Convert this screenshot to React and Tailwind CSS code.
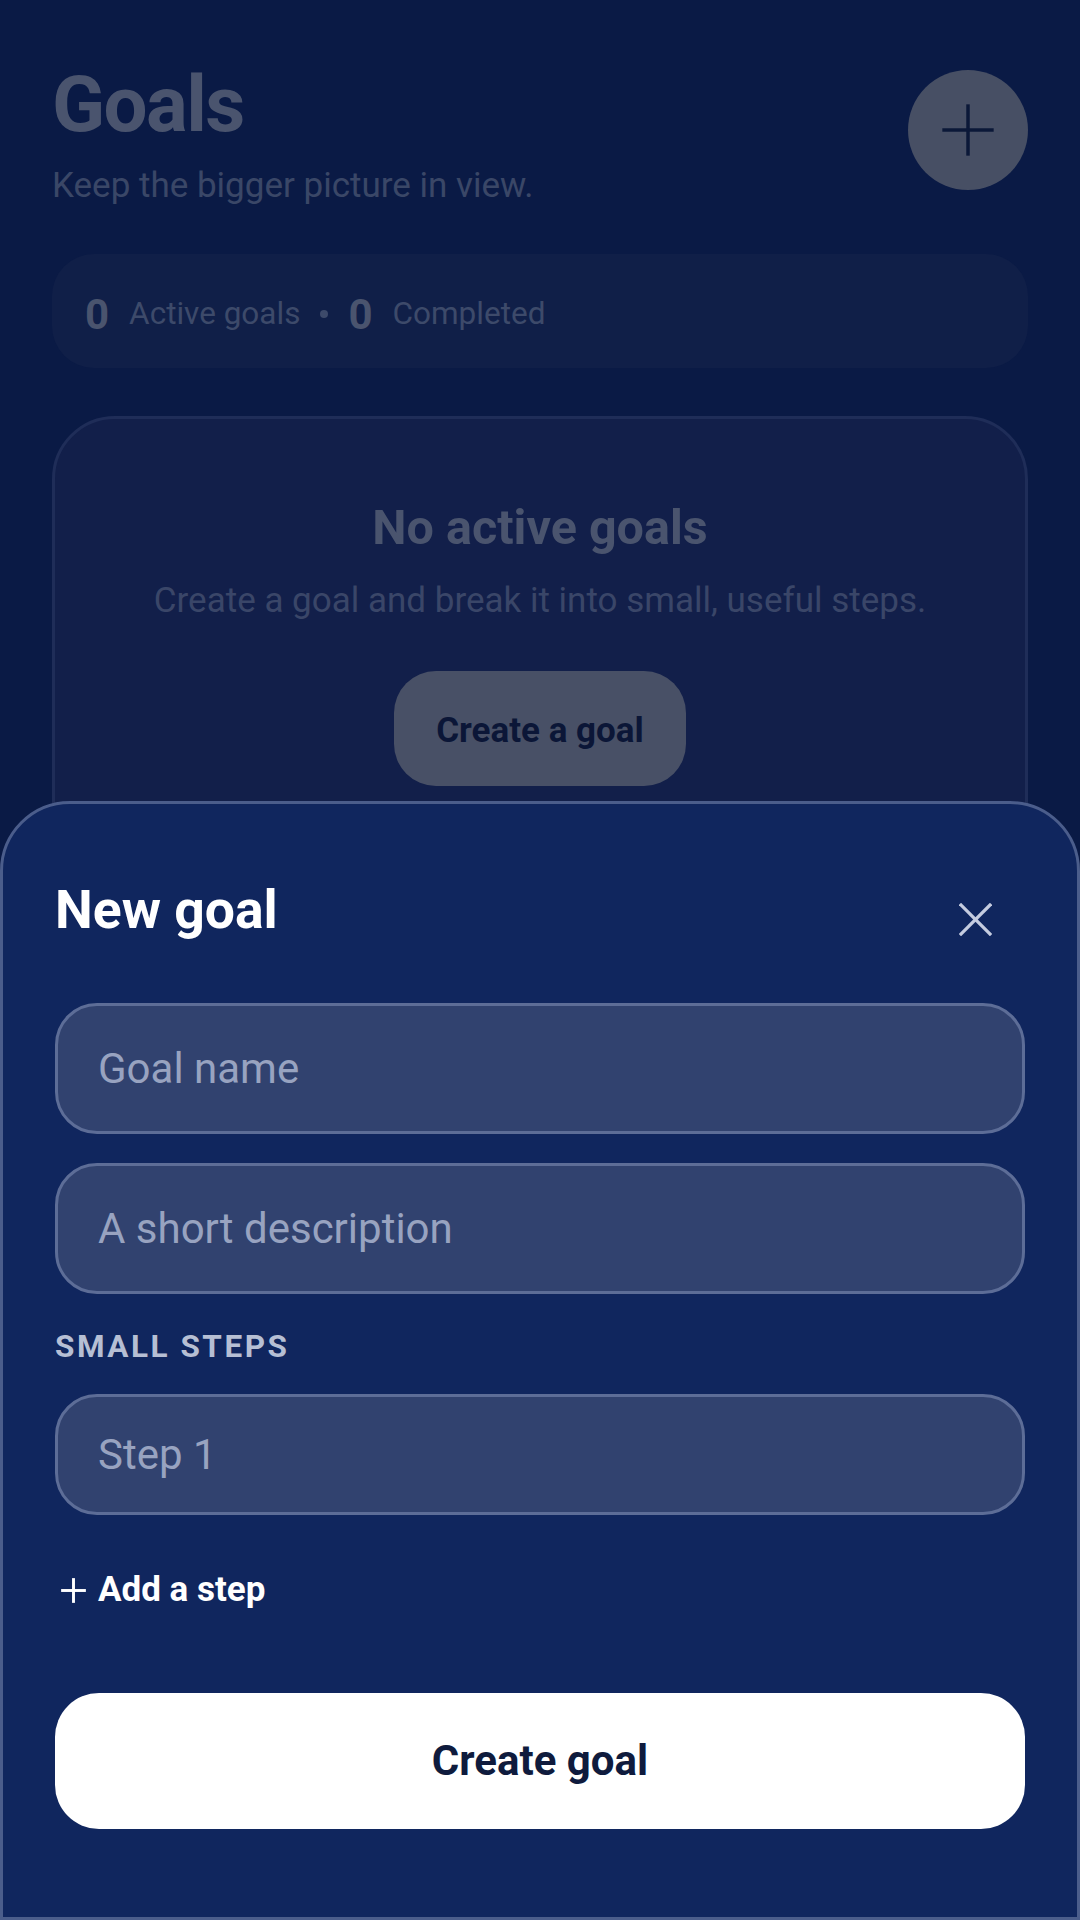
import React from "react";

function PlusIcon({ size, stroke, color, className }) {
  return (
    <svg width={size} height={size} viewBox="0 0 24 24" className={className} fill="none">
      <line x1="12" y1="1" x2="12" y2="23" stroke={color} strokeWidth={stroke} />
      <line x1="1" y1="12" x2="23" y2="12" stroke={color} strokeWidth={stroke} />
    </svg>
  );
}

function XIcon({ size, stroke, color }) {
  return (
    <svg width={size} height={size} viewBox="0 0 24 24" fill="none">
      <line x1="1.5" y1="1.5" x2="22.5" y2="22.5" stroke={color} strokeWidth={stroke} strokeLinecap="square" />
      <line x1="22.5" y1="1.5" x2="1.5" y2="22.5" stroke={color} strokeWidth={stroke} strokeLinecap="square" />
    </svg>
  );
}

function Field({ placeholder, h }) {
  return (
    <input
      type="text"
      placeholder={placeholder}
      className={`w-full ${h} rounded-[42px] border-[3px] border-[#5d6d97] bg-[#31426f] px-[40px] text-[42px] text-white outline-none placeholder:text-[#98a3c0]`}
    />
  );
}

export default function App() {
  return (
    <div className="relative w-[1080px] h-[1920px] overflow-hidden bg-[#0a1a45] font-['Roboto','Noto_Sans',sans-serif]">
      {/* Background page */}
      <div className="px-[52px] pt-[66px]">
        <div className="flex items-start justify-between">
          <div>
            <h1 className="text-[78px] leading-none font-bold tracking-[-0.02em] text-[#4a546e]">Goals</h1>
            <p className="mt-[16px] text-[35px] leading-[52px] text-[#3a4767]">Keep the bigger picture in view.</p>
          </div>
          <button className="mt-[4px] w-[120px] h-[120px] rounded-full bg-[#474f64] flex items-center justify-center">
            <PlusIcon size={56} stroke={1.5} color="#0b1838" />
          </button>
        </div>

        <div className="mt-[42px] h-[114px] rounded-[42px] bg-[#101f48] flex items-center gap-[20px] px-[33px] pt-[6px]">
          <span className="text-[42px] font-bold text-[#4a546e]">0</span>
          <span className="text-[31.5px] text-[#3d4a6a]">Active goals</span>
          <span className="w-[8px] h-[8px] rounded-full bg-[#3d4a6a]"></span>
          <span className="text-[42px] font-bold text-[#4a546e]">0</span>
          <span className="text-[31.5px] text-[#3d4a6a]">Completed</span>
        </div>

        <div className="mt-[48px] h-[560px] rounded-[63px] border-[3px] border-[#1f2d58] bg-[#121f4a] flex flex-col items-center pt-[72px]">
          <h2 className="text-[48.5px] leading-[73.5px] font-bold text-[#4a546e]">No active goals</h2>
          <p className="mt-[10px] text-[35px] leading-[52.5px] text-[#3a4668]">Create a goal and break it into small, useful steps.</p>
          <button className="mt-[44px] w-[292px] h-[115px] rounded-[42px] bg-[#485066] pt-[5px] text-[35px] font-bold text-[#0b1637]">
            Create a goal
          </button>
        </div>
      </div>

      {/* Bottom sheet */}
      <div className="absolute left-0 right-0 bottom-0 top-[801px] rounded-t-[70px] border-[3px] border-[#4b5d8b] bg-[#10265e] px-[52px]">
        <div className="flex items-start justify-between pt-[69px]">
          <h2 className="text-[53.5px] leading-[73.5px] font-bold text-white">New goal</h2>
          <button className="mt-[13px] mr-[17px] w-[66px] h-[66px] flex items-center justify-center">
            <XIcon size={33} stroke={2.4} color="#c5cce0" />
          </button>
        </div>

        <div className="mt-[51px]">
          <Field placeholder="Goal name" h="h-[131px]" />
        </div>
        <div className="mt-[29px]">
          <Field placeholder="A short description" h="h-[131px]" />
        </div>

        <div className="mt-[32px] text-[31.5px] leading-[42px] font-bold uppercase tracking-[0.08em] text-[#b6bfd4]">
          Small steps
        </div>

        <div className="mt-[26px]">
          <Field placeholder="Step 1" h="h-[121px]" />
        </div>

        <button className="mt-[49px] flex items-center gap-[11px] h-[52.5px]">
          <PlusIcon size={27} stroke={2.6} color="#ffffff" className="ml-[5px]" />
          <span className="text-[35px] leading-[52.5px] font-bold text-white">Add a step</span>
        </button>

        <button className="mt-[76px] w-full h-[136px] rounded-[44px] bg-white text-[42px] font-bold text-[#0f1b3d]">
          Create goal
        </button>
      </div>
    </div>
  );
}
